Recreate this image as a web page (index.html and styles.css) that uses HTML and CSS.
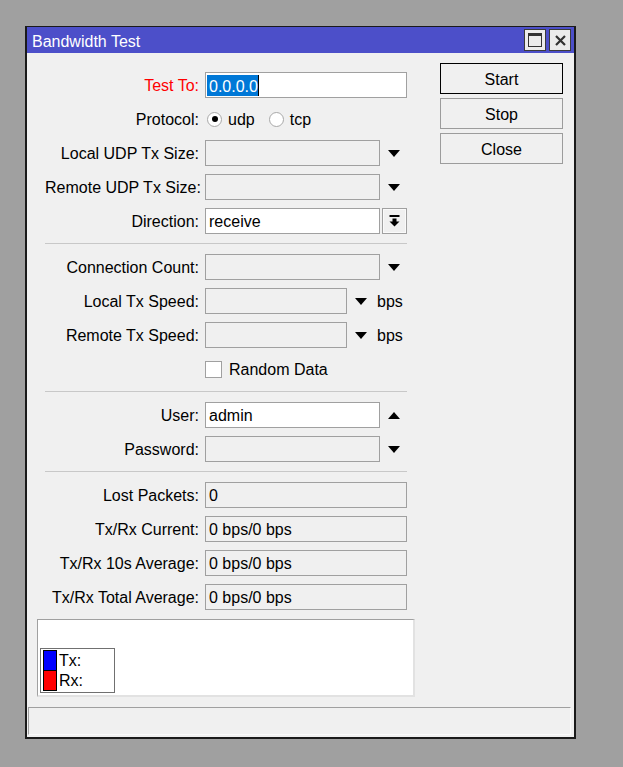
FILE: index.html
```html
<!DOCTYPE html>
<html>
<head>
<meta charset="utf-8">
<title>Bandwidth Test</title>
<link rel="stylesheet" href="styles.css">
</head>
<body>
<div class="window">
  <div class="titlebar">
    <span class="title">Bandwidth Test</span>
    <div class="tbtns">
      <div class="tbtn">
        <svg width="14" height="14" viewBox="0 0 14 14"><rect x="0.5" y="0.5" width="13" height="13" fill="none" stroke="#333" stroke-width="1"/><rect x="0" y="0" width="14" height="3" fill="#333"/></svg>
      </div>
      <div class="tbtn">
        <svg width="11" height="11" viewBox="0 0 11 11"><path d="M1 1 L10 10 M10 1 L1 10" stroke="#333" stroke-width="2.2" fill="none"/></svg>
      </div>
    </div>
  </div>
  <div class="body">
    <div class="main">
      <div class="left">
        <div class="form">
          <div class="section">
            <div class="row">
              <span class="lbl red">Test To:</span>
              <div class="field white w202 tight"><span class="sel">0.0.0.0</span></div>
            </div>
            <div class="row">
              <span class="lbl">Protocol:</span>
              <div class="radios">
                <span class="radio on"></span><span class="rtext">udp</span>
                <span class="radio"></span><span class="rtext">tcp</span>
              </div>
            </div>
            <div class="row">
              <span class="lbl">Local UDP Tx Size:</span>
              <div class="field w175"></div>
              <span class="arrowbox"><span class="tri-down"></span></span>
            </div>
            <div class="row">
              <span class="lbl">Remote UDP Tx Size:</span>
              <div class="field w175"></div>
              <span class="arrowbox"><span class="tri-down"></span></span>
            </div>
            <div class="row">
              <span class="lbl">Direction:</span>
              <div class="field white w175">receive</div>
              <span class="dirbtn">
                <svg width="11" height="12" viewBox="0 0 11 12"><rect x="0.5" y="0" width="10" height="2" fill="#000"/><rect x="3.5" y="3.5" width="4" height="3.5" fill="#000"/><path d="M0.5 6.5 L10.5 6.5 L5.5 11.5 Z" fill="#000"/></svg>
              </span>
            </div>
          </div>
          <div class="sep"></div>
          <div class="section">
            <div class="row">
              <span class="lbl">Connection Count:</span>
              <div class="field w175"></div>
              <span class="arrowbox"><span class="tri-down"></span></span>
            </div>
            <div class="row">
              <span class="lbl">Local Tx Speed:</span>
              <div class="field w142"></div>
              <span class="arrowbox w28"><span class="tri-down"></span></span>
              <span class="unit">bps</span>
            </div>
            <div class="row">
              <span class="lbl">Remote Tx Speed:</span>
              <div class="field w142"></div>
              <span class="arrowbox w28"><span class="tri-down"></span></span>
              <span class="unit">bps</span>
            </div>
            <div class="row">
              <span class="lbl"></span>
              <span class="check"></span><span class="ctext">Random Data</span>
            </div>
          </div>
          <div class="sep"></div>
          <div class="section">
            <div class="row">
              <span class="lbl">User:</span>
              <div class="field white w175">admin</div>
              <span class="arrowbox"><span class="tri-up"></span></span>
            </div>
            <div class="row">
              <span class="lbl">Password:</span>
              <div class="field w175"></div>
              <span class="arrowbox"><span class="tri-down"></span></span>
            </div>
          </div>
          <div class="sep"></div>
          <div class="section">
            <div class="row">
              <span class="lbl">Lost Packets:</span>
              <div class="field w202">0</div>
            </div>
            <div class="row">
              <span class="lbl">Tx/Rx Current:</span>
              <div class="field w202">0 bps/0 bps</div>
            </div>
            <div class="row">
              <span class="lbl">Tx/Rx 10s Average:</span>
              <div class="field w202">0 bps/0 bps</div>
            </div>
            <div class="row">
              <span class="lbl">Tx/Rx Total Average:</span>
              <div class="field w202">0 bps/0 bps</div>
            </div>
          </div>
        </div>
        <div class="graph">
          <div class="legend">
            <div class="lrow"><span class="swatch tx"></span><span class="ltext">Tx:</span></div>
            <div class="lrow"><span class="swatch rx"></span><span class="ltext">Rx:</span></div>
          </div>
        </div>
      </div>
      <div class="buttons">
        <div class="btn default">Start</div>
        <div class="btn">Stop</div>
        <div class="btn">Close</div>
      </div>
    </div>
    <div class="status"></div>
  </div>
</div>
</body>
</html>
```

FILE: styles.css
```css
* { box-sizing: border-box; }
html, body { margin: 0; padding: 0; }
body {
  background: #a0a0a0;
  font-family: "Liberation Sans", Arial, sans-serif;
  font-size: 16px;
  color: #000;
  width: 623px;
  height: 767px;
  overflow: hidden;
}
.window {
  margin: 26px 0 0 25px;
  width: 551px;
  height: 713px;
  background: #f0f0f0;
  border-style: solid;
  border-color: #1a1a1a;
  border-width: 1px 2px 2px 2px;
  display: flex;
  flex-direction: column;
}
.titlebar {
  height: 26px;
  background: #4c4fc9;
  display: flex;
  align-items: center;
  justify-content: space-between;
  padding: 0 3px 0 5px;
}
.title { color: #fff; font-size: 16px; padding-top: 3px; }
.tbtns { display: flex; gap: 3px; }
.tbtn {
  width: 22px;
  height: 22px;
  border: 1px solid #3a3a3a;
  background: #ececec;
  display: flex;
  align-items: center;
  justify-content: center;
}
.body {
  flex: 1;
  display: flex;
  flex-direction: column;
  padding-top: 10px;
}
.main { display: flex; padding: 0 11px 0 10px; gap: 25px; }
.left { width: 378px; padding-top: 9px; }
.form { padding: 0 8px; }
.section { display: flex; flex-direction: column; gap: 8px; }
.sep { height: 1px; background: #c8c8c8; margin: 9px 0 10px; }
.row { display: flex; align-items: center; height: 26px; }
.lbl {
  width: 154px;
  flex: none;
  text-align: right;
  margin-right: 6px;
  white-space: nowrap;
  padding-top: 2px;
}
.lbl.red { color: #f00; }
.field {
  flex: none;
  height: 26px;
  border: 1px solid #a0a0a0;
  background: #f0f0f0;
  padding: 2px 3px 0;
  display: flex;
  align-items: center;
  white-space: nowrap;
}
.field.white { background: #fff; }
.field.tight { padding: 0 0 0 1px; }
.w202 { width: 202px; }
.w175 { width: 175px; }
.w142 { width: 142px; }
.sel {
  background: #0078d7;
  color: #fff;
  height: 21px;
  line-height: 23px;
  padding-left: 2px;
  border-right: 1px solid #000;
}
.arrowbox {
  width: 27px;
  height: 26px;
  display: flex;
  align-items: center;
  justify-content: center;
  flex: none;
}
.arrowbox.w28 { width: 28px; }
.tri-down {
  width: 0; height: 0;
  border-left: 6.5px solid transparent;
  border-right: 6.5px solid transparent;
  border-top: 7px solid #000;
}
.tri-up {
  width: 0; height: 0;
  border-left: 6.5px solid transparent;
  border-right: 6.5px solid transparent;
  border-bottom: 7px solid #000;
}
.unit { margin-left: 2px; padding-top: 2px; }
.dirbtn {
  margin-left: 2px;
  width: 25px;
  height: 26px;
  border: 1px solid #a0a0a0;
  box-shadow: inset 0 0 0 1px #fafafa;
  background: #f0f0f0;
  display: flex;
  align-items: center;
  justify-content: center;
  flex: none;
}
.radios { display: flex; align-items: center; }
.radio {
  width: 15px;
  height: 15px;
  border-radius: 50%;
  border: 1px solid #a8a8a8;
  background: #fff;
  margin-left: 2px;
  margin-right: 6px;
  display: flex;
  align-items: center;
  justify-content: center;
}
.radio.on::after {
  content: "";
  width: 6px;
  height: 6px;
  border-radius: 50%;
  background: #000;
}
.rtext { margin-right: 12px; padding-top: 2px; }
.check {
  width: 17px;
  height: 17px;
  border: 1px solid #a0a0a0;
  background: #fff;
  margin-right: 7px;
  flex: none;
}
.ctext { padding-top: 2px; }
.graph {
  margin-top: 9px;
  height: 78px;
  background: #fff;
  border-style: solid;
  border-color: #a0a0a0 #e2e2e2 #e2e2e2 #a0a0a0;
  border-width: 1px 2px 2px 1px;
  display: flex;
  align-items: flex-end;
  padding: 0 0 2px 2px;
}
.legend {
  width: 75px;
  height: 45px;
  border: 1px solid #707070;
  background: #fff;
  padding: 1px 0 0 2px;
}
.lrow { display: flex; align-items: center; height: 20px; }
.swatch {
  width: 14px;
  height: 21px;
  border: 1px solid #000;
  flex: none;
}
.swatch.tx { background: #0000ff; }
.swatch.rx { background: #ff0000; }
.ltext { margin-left: 2px; padding-top: 2px; }
.buttons { width: 123px; display: flex; flex-direction: column; gap: 4px; }
.btn {
  height: 31px;
  border: 1px solid #9c9c9c;
  background: #f0f0f0;
  display: flex;
  align-items: center;
  justify-content: center;
  padding-top: 2px;
}
.btn.default { border-color: #000; }
.status {
  margin: 10px 3px 0 1px;
  height: 28px;
  border-style: solid;
  border-color: #a0a0a0 #fafafa #fafafa #a0a0a0;
  border-width: 1px;
}
```
